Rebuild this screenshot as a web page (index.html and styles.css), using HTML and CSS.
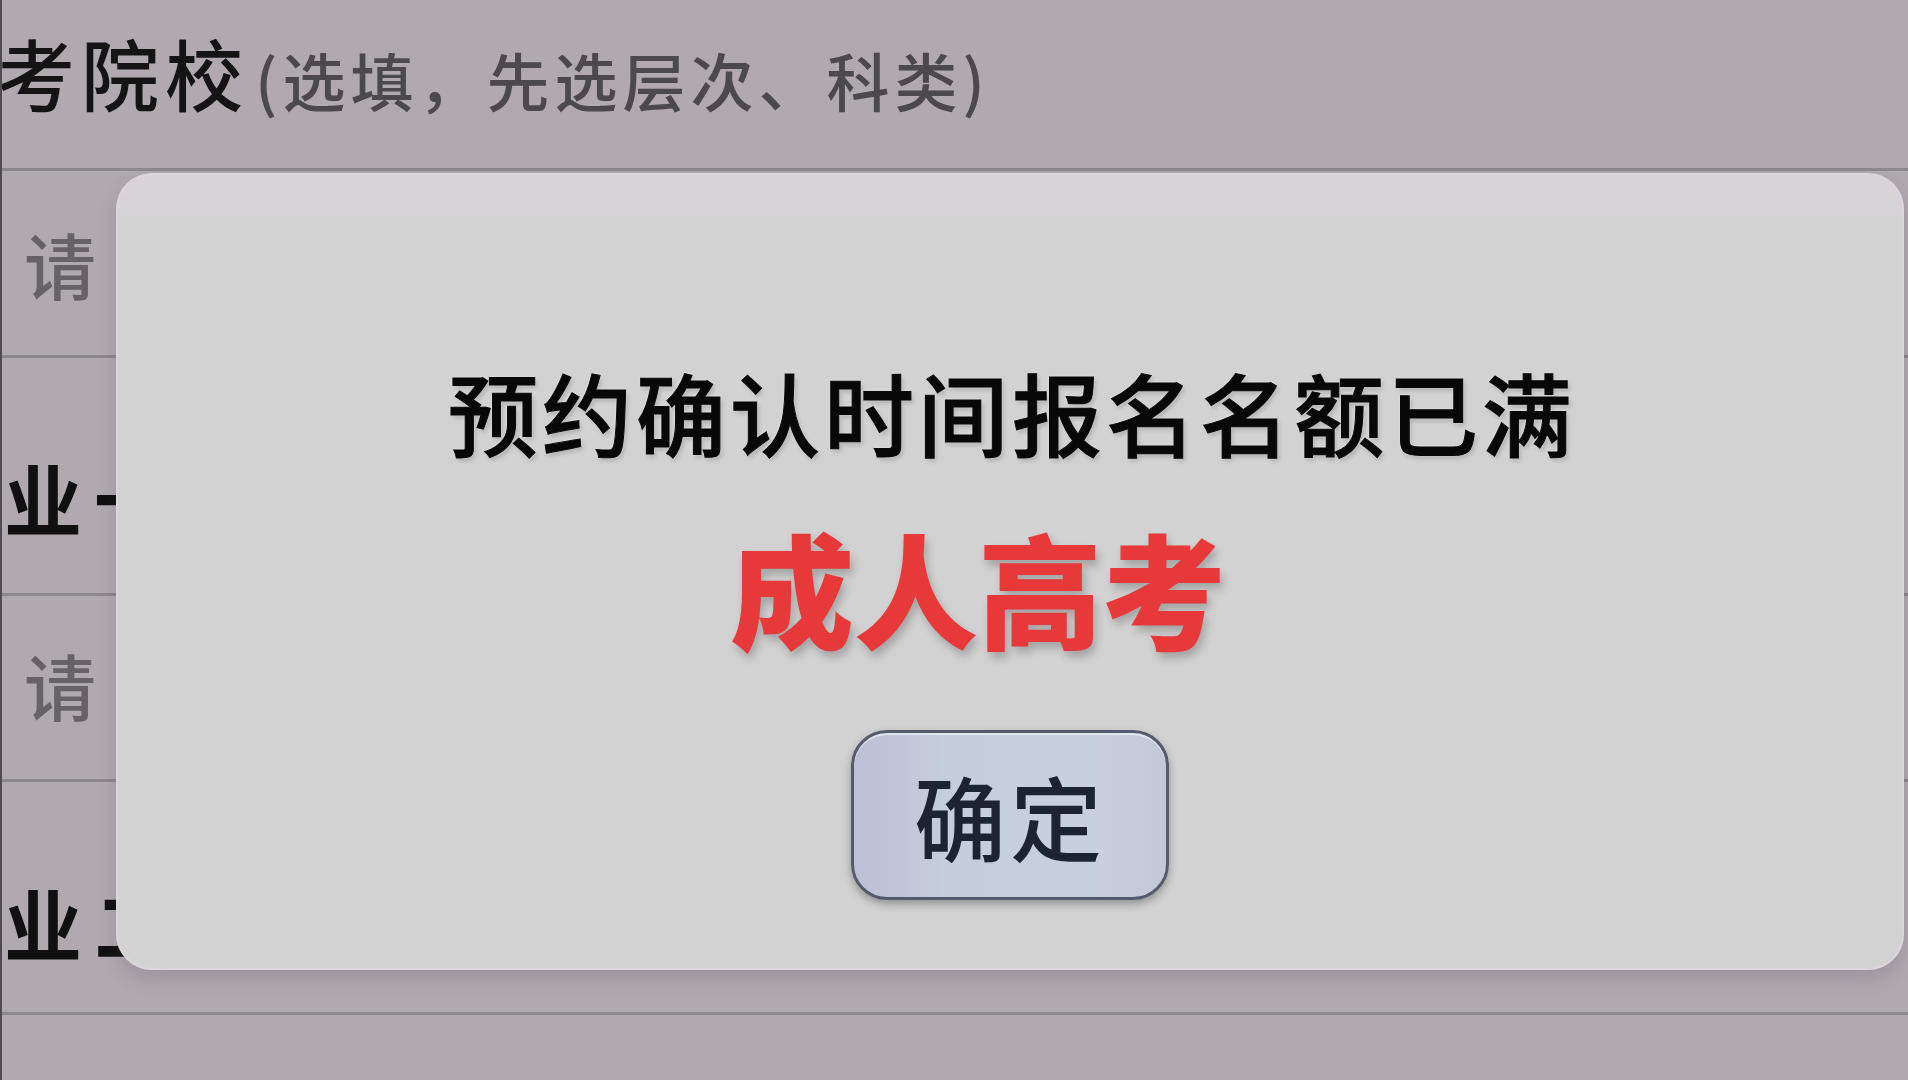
FILE: index.html
```html
<!DOCTYPE html>
<html lang="zh-CN">

<head>
    <meta charset="UTF-8">
    <meta name="viewport" content="width=device-width, initial-scale=1.0">
    <title>报考院校</title>
    <link rel="stylesheet" href="styles.css">
</head>

<body>
    <!-- 底层表单 -->
    <div class="page">
        <div class="header">
            <span class="title">考院校</span><span class="hint">(选填，先选层次、科类)</span>
        </div>
        <div class="row row-select">
            <span class="placeholder">请</span>
        </div>
        <div class="row row-label">
            <span class="label">业一</span>
        </div>
        <div class="row row-select row-short">
            <span class="placeholder">请</span>
        </div>
        <div class="row row-label row-last">
            <span class="label">业二</span>
        </div>
    </div>

    <!-- 弹窗 -->
    <div class="dialog">
        <p class="message">预约确认时间报名名额已满</p>
        <p class="stamp">成人高考</p>
        <button class="btn-ok">确定</button>
    </div>
</body>

</html>
```

FILE: styles.css
```css
html * {
    margin: 0;
    padding: 0;
    box-sizing: border-box;
}

body {
    width: 1908px;
    height: 1080px;
    overflow: hidden;
    position: relative;
    background: #b0a9b0;
    font-family: "Noto Sans CJK SC", sans-serif;
}

.page {
    height: 100%;
    border-left: 2px solid #4e4a4e;
}

/* 标题行 */
.header {
    height: 171px;
    padding-top: 33px;
    border-bottom: 3px solid #8c878c;
    white-space: nowrap;
    overflow: hidden;
}

.header .title {
    margin-left: -5px;
    font-size: 78px;
    line-height: 1;
    font-weight: 500;
    letter-spacing: 6px;
    color: #141414;
}

.header .hint {
    margin-left: 6px;
    font-size: 63px;
    line-height: 1;
    font-weight: 500;
    letter-spacing: 5px;
    color: #4c494c;
}

/* 表单行 */
.row {
    display: flex;
    border-bottom: 3px solid #8c878c;
    white-space: nowrap;
    overflow: hidden;
}

.row-select {
    height: 187px;
    padding-left: 22px;
    padding-top: 56px;
}

.row-short {
    height: 186px;
    padding-top: 52px;
}

.row-label {
    height: 238px;
    padding-top: 100px;
}

.row-last {
    height: 233px;
    padding-top: 101px;
}

.placeholder {
    font-size: 72px;
    line-height: 1;
    font-weight: 500;
    color: #666266;
}

.label {
    margin-left: 2px;
    font-size: 78px;
    line-height: 1;
    font-weight: 700;
    letter-spacing: 12px;
    color: #101010;
}

/* 弹窗 */
.dialog {
    position: absolute;
    left: 116px;
    top: 173px;
    width: 1788px;
    height: 797px;
    display: flex;
    flex-direction: column;
    align-items: center;
    padding-top: 191px;
    border-radius: 36px;
    border: 2px solid #ddd5dd;
    background: linear-gradient(#dad4da, #d2d2d2 60px);
    box-shadow: 0 10px 18px rgba(80, 60, 80, 0.18);
}

.message {
    font-size: 90px;
    line-height: 1;
    font-weight: 500;
    letter-spacing: 4px;
    margin-left: 4px;
    color: #080808;
    text-shadow: 0 0 3px rgba(255, 255, 255, 0.7), 2px 3px 4px rgba(0, 0, 0, 0.18);
    -webkit-text-stroke: 1px #080808;
    white-space: nowrap;
}

.stamp {
    margin-top: 68px;
    margin-right: 64px;
    font-size: 124px;
    line-height: 1;
    font-weight: 900;
    color: #e8393a;
    text-shadow: 3px 6px 8px rgba(0, 0, 0, 0.22);
    white-space: nowrap;
}

.btn-ok {
    margin-top: 82px;
    width: 318px;
    height: 170px;
    display: flex;
    align-items: center;
    justify-content: center;
    border: 3px solid #555b6a;
    border-radius: 36px;
    background: linear-gradient(90deg, #bcbfd6, #c5cedb 30%, #c7d0dc 80%, #c2c8d6);
    box-shadow: 0 4px 8px rgba(0, 0, 0, 0.3), inset 0 2px 0 rgba(255, 255, 255, 0.5);
    font-family: "Noto Sans CJK SC", sans-serif;
    font-size: 92px;
    line-height: 1;
    font-weight: 500;
    letter-spacing: 4px;
    color: #1c2433;
    cursor: pointer;
}
```
